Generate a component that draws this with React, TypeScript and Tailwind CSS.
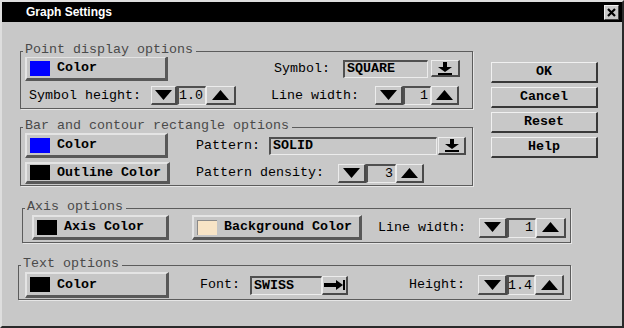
import React from "react"

// shared looks
const mono = "font-['Liberation_Mono','DejaVu_Sans_Mono',monospace] text-[13.33px] leading-[14px]"
const raised =
  "box-border border-t border-l border-b-2 border-r-2 border-t-[#ececec] border-l-[#ececec] border-b-[#4a4a4a] border-r-[#4a4a4a] bg-[#c8c8c8]"
const sunken =
  "box-border border-t-2 border-l-2 border-b border-r border-t-[#505050] border-l-[#505050] border-b-[#ececec] border-r-[#ececec] bg-[#c8c8c8]"

function Tri({ up = false }: { up?: boolean }) {
  return (
    <svg width="17" height="10" viewBox="0 0 17 10">
      {up ? <polygon points="0,10 17,10 8.5,0" fill="#000" /> : <polygon points="0,0 17,0 8.5,10" fill="#000" />}
    </svg>
  )
}

function DropIcon() {
  return (
    <svg width="16" height="13" viewBox="0 0 16 13">
      <rect x="6" y="0" width="4" height="5" fill="#000" />
      <polygon points="1,5 15,5 8,10" fill="#000" />
      <rect x="1" y="11" width="14" height="2" fill="#000" />
    </svg>
  )
}

function TabIcon() {
  return (
    <svg width="22" height="10" viewBox="0 0 22 10">
      <rect x="0" y="3" width="13" height="4" fill="#000" />
      <polygon points="12,0 19,5 12,10" fill="#000" />
      <rect x="19" y="0" width="2" height="10" fill="#000" />
    </svg>
  )
}

function ColorButton({ swatch, label, cls }: { swatch: string; label: string; cls: string }) {
  return (
    <div
      className={`flex items-center shrink-0 box-border border-t-2 border-l-2 border-b-[3px] border-r-[3px] border-t-[#e4e4e4] border-l-[#e4e4e4] border-b-[#585858] border-r-[#585858] bg-[#c6c6c6] ${cls}`}
    >
      <span className={`ml-[3px] w-[20px] h-[15px] shrink-0 ${swatch}`} />
      <span className="ml-[7px] font-bold text-black whitespace-nowrap">{label}</span>
    </div>
  )
}

function Spinner({ value, cls, dw, vw, uw }: { value: string; cls: string; dw: string; vw: string; uw: string }) {
  return (
    <div className={`flex shrink-0 ${cls}`}>
      <div className={`${raised} ${dw} h-full flex items-center justify-center`}>
        <Tri />
      </div>
      <div className={`${sunken} ${vw} h-full flex items-center justify-end pr-[2px] text-black`}>{value}</div>
      <div className={`${raised} ${uw} h-full flex items-center justify-center`}>
        <Tri up />
      </div>
    </div>
  )
}

function Group({ title, cls, children }: { title: string; cls: string; children: React.ReactNode }) {
  return (
    <div className={`relative box-border border border-[#5c5c5c] shadow-[1px_1px_0_#e6e6e6] ${cls}`}>
      <span className="absolute left-[2px] top-[-9px] pl-[2px] pr-[3px] bg-[#c8c8c8] text-[#4a4a4a] whitespace-nowrap">
        {title}
      </span>
      {children}
    </div>
  )
}

function SideButton({ label }: { label: string }) {
  return (
    <div
      className={`w-[107px] h-[21px] box-border border-t border-l border-b-2 border-r-2 border-t-[#f0f0f0] border-l-[#f0f0f0] border-b-[#383838] border-r-[#383838] flex items-center justify-center font-bold text-black`}
    >
      {label}
    </div>
  )
}

export default function App() {
  return (
    <div
      className={`w-[624px] h-[328px] box-border overflow-hidden bg-[#c8c8c8] border-t-2 border-l-2 border-t-[#dedede] border-l-[#dedede] border-b-2 border-r-2 border-b-[#2a2a2a] border-r-[#2a2a2a] ${mono}`}
    >
      {/* title bar */}
      <div className="h-[20px] bg-black flex items-center">
        <span className="pl-[24px] font-['Liberation_Sans',Arial,sans-serif] text-[12px] font-bold text-white">
          Graph Settings
        </span>
        <div
          className={`ml-auto mr-[3px] w-[15px] h-[15px] box-border border-t border-l border-b border-r border-t-[#f0f0f0] border-l-[#f0f0f0] border-b-[#404040] border-r-[#404040] bg-[#c8c8c8] flex items-center justify-center`}
        >
          <svg width="9" height="9" viewBox="0 0 9 9">
            <path d="M1 1 L8 8 M8 1 L1 8" stroke="#000" strokeWidth="2.2" />
          </svg>
        </div>
      </div>

      {/* upper area: two option groups and the side buttons */}
      <div className="flex items-start mt-[29px]">
        <div className="ml-[18px] w-[453px] flex flex-col">
          <Group title="Point display options" cls="h-[58px]">
            <div className="flex items-center h-[25px] mt-[4px] ml-[4px]">
              <ColorButton swatch="bg-[#0000ff]" label="Color" cls="w-[143px] h-[25px]" />
              <span className="ml-[106px] text-black">Symbol:</span>
              <div className={`${sunken} ml-[13px] w-[85px] h-[18px] flex items-center pl-[2px] font-bold text-black`}>
                SQUARE
              </div>
              <div className={`${raised} ml-[3px] w-[29px] h-[17px] flex items-center justify-center`}>
                <DropIcon />
              </div>
            </div>
            <div className="flex items-center h-[19px] mt-[5px]">
              <span className="ml-[8px] text-black">Symbol height:</span>
              <Spinner value="1.0" cls="ml-[10px] h-[19px]" dw="w-[26px]" vw="w-[29px]" uw="w-[30px]" />
              <span className="ml-[35px] text-black">Line width:</span>
              <Spinner value="1" cls="ml-[16px] h-[19px]" dw="w-[28px]" vw="w-[28px]" uw="w-[28px]" />
            </div>
          </Group>

          <Group title="Bar and contour rectangle options" cls="h-[59px] mt-[18px]">
            <div className="flex items-center h-[25px] mt-[5px] ml-[4px]">
              <ColorButton swatch="bg-[#0000ff]" label="Color" cls="w-[143px] h-[25px]" />
              <span className="ml-[28px] text-black">Pattern:</span>
              <div className={`${sunken} ml-[9px] w-[168px] h-[18px] flex items-center pl-[2px] font-bold text-black`}>
                SOLID
              </div>
              <div className={`${raised} ml-[1px] w-[28px] h-[18px] flex items-center justify-center`}>
                <DropIcon />
              </div>
            </div>
            <div className="flex items-center h-[22px] mt-[4px] ml-[4px]">
              <ColorButton swatch="bg-black" label="Outline Color" cls="w-[145px] h-[22px]" />
              <span className="ml-[26px] text-black">Pattern density:</span>
              <Spinner value="3" cls="ml-[14px] h-[19px]" dw="w-[28px]" vw="w-[30px]" uw="w-[28px]" />
            </div>
          </Group>
        </div>

        <div className="ml-[18px] mt-[11px] flex flex-col gap-[4px]">
          <SideButton label="OK" />
          <SideButton label="Cancel" />
          <SideButton label="Reset" />
          <SideButton label="Help" />
        </div>
      </div>

      <Group title="Axis options" cls="ml-[20px] mt-[22px] w-[549px] h-[35px]">
        <div className="flex items-center h-[25px] mt-[6px] ml-[9px]">
          <ColorButton swatch="bg-black" label="Axis Color" cls="w-[137px] h-[25px]" />
          <ColorButton
            swatch="bg-[#f8e4c6] border-t border-l border-[#8a8a8a]"
            label="Background Color"
            cls="ml-[23px] w-[170px] h-[25px]"
          />
          <span className="ml-[16px] text-black">Line width:</span>
          <Spinner value="1" cls="ml-[13px] h-[20px]" dw="w-[28px]" vw="w-[29px]" uw="w-[30px]" />
        </div>
      </Group>

      <Group title="Text options" cls="ml-[16px] mt-[22px] w-[553px] h-[35px]">
        <div className="flex items-center h-[26px] mt-[6px] ml-[6px]">
          <ColorButton swatch="bg-black" label="Color" cls="w-[144px] h-[26px]" />
          <span className="ml-[31px] text-black">Font:</span>
          <div className={`${sunken} ml-[10px] w-[72px] h-[19px] flex items-center pl-[2px] font-bold text-black`}>
            SWISS
          </div>
          <div className={`${raised} w-[26px] h-[19px] flex items-center justify-center`}>
            <TabIcon />
          </div>
          <span className="ml-[61px] text-black">Height:</span>
          <Spinner value="1.4" cls="ml-[13px] h-[20px]" dw="w-[29px]" vw="w-[28px]" uw="w-[29px]" />
        </div>
      </Group>
    </div>
  )
}
